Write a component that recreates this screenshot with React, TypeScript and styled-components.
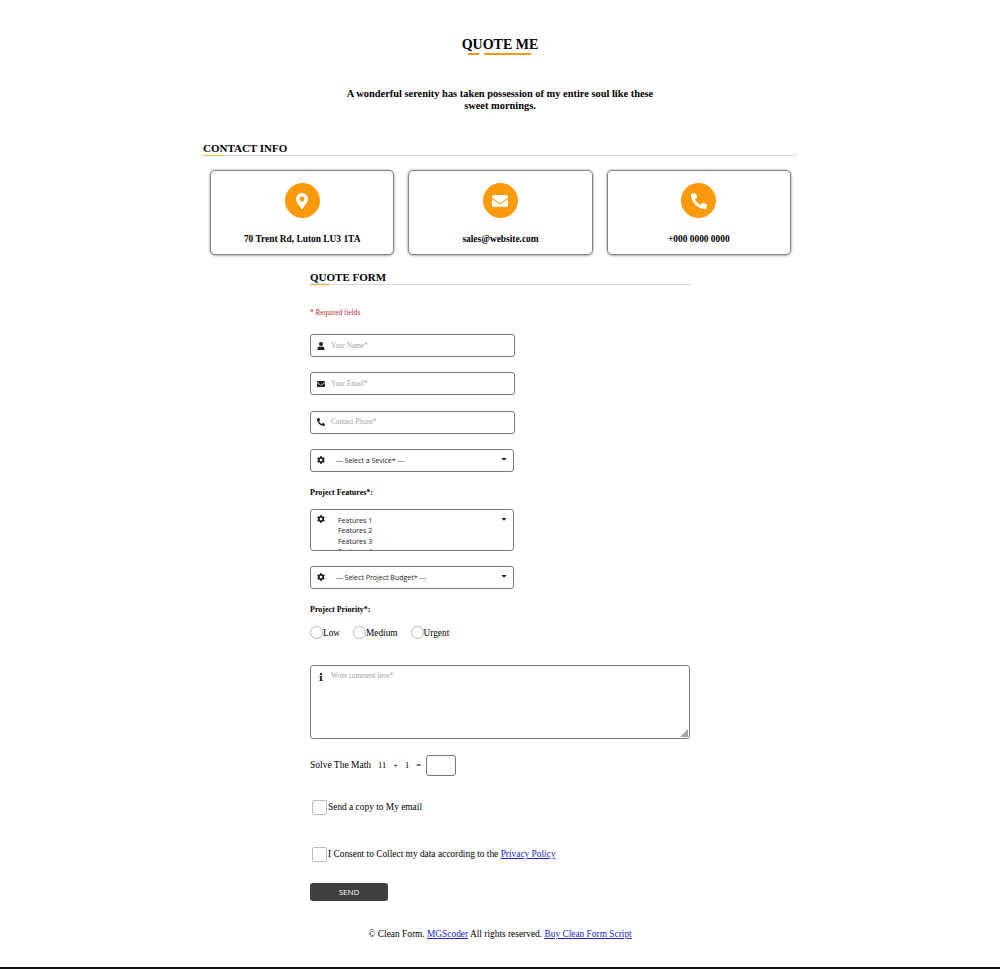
import React from 'react';
import styled, { createGlobalStyle } from 'styled-components';
import { FaMapMarkerAlt, FaEnvelope, FaPhoneAlt, FaUser, FaCog, FaInfo, FaCaretDown } from 'react-icons/fa';

const GlobalStyle = createGlobalStyle`
    html, body {
        margin: 0;
        padding: 0;
        background: #fff;
    }
    body {
        font-family: 'Liberation Serif', 'Times New Roman', serif;
        color: #000;
    }
`;

const contacts = [
    { icon: <FaMapMarkerAlt />, text: '70 Trent Rd, Luton LU3 1TA' },
    { icon: <FaEnvelope />, text: 'sales@website.com' },
    { icon: <FaPhoneAlt />, text: '+000 0000 0000' },
];

const textFields = [
    { icon: <FaUser />, placeholder: 'Your Name*' },
    { icon: <FaEnvelope />, placeholder: 'Your Email*' },
    { icon: <FaPhoneAlt />, placeholder: 'Contact Phone*' },
];

export default function App() {
    return (
        <Page>
            <GlobalStyle />
            <Title>QUOTE ME</Title>
            <TitleRule>
                <RuleDash $width={11} />
                <RuleDash $width={47} />
            </TitleRule>
            <Intro>A wonderful serenity has taken possession of my entire soul like these sweet mornings.</Intro>

            <Wrapper>
                <SectionHead>
                    <SectionTitle>CONTACT INFO</SectionTitle>
                </SectionHead>
                <Cards>
                    {contacts.map((c) => (
                        <Card key={c.text}>
                            <CardIcon>{c.icon}</CardIcon>
                            <CardText>{c.text}</CardText>
                        </Card>
                    ))}
                </Cards>
            </Wrapper>

            <Form>
                <FormHead>
                    <SectionTitle>QUOTE FORM</SectionTitle>
                </FormHead>
                <Required>* Required fields</Required>

                {textFields.map((f) => (
                    <Field key={f.placeholder}>
                        <FieldIcon>{f.icon}</FieldIcon>
                        <Placeholder>{f.placeholder}</Placeholder>
                    </Field>
                ))}

                <SelectBox>
                    <SelectIcon><FaCog /></SelectIcon>
                    <SelectText>--- Select a Sevice* ---</SelectText>
                    <Caret><FaCaretDown /></Caret>
                </SelectBox>

                <FieldLabel>Project Features*:</FieldLabel>
                <MultiBox>
                    <SelectIcon><FaCog /></SelectIcon>
                    <Options>
                        <span>Features 1</span>
                        <span>Features 2</span>
                        <span>Features 3</span>
                        <span>Features 4</span>
                    </Options>
                    <Caret><FaCaretDown /></Caret>
                </MultiBox>

                <SelectBox>
                    <SelectIcon><FaCog /></SelectIcon>
                    <SelectText>--- Select Project Budget* ---</SelectText>
                    <Caret><FaCaretDown /></Caret>
                </SelectBox>

                <FieldLabel>Project Priority*:</FieldLabel>
                <Radios>
                    {['Low', 'Medium', 'Urgent'].map((r) => (
                        <RadioItem key={r}>
                            <RadioDot />
                            {r}
                        </RadioItem>
                    ))}
                </Radios>

                <TextArea>
                    <AreaIcon><FaInfo /></AreaIcon>
                    <Placeholder>Write comment here*</Placeholder>
                    <Grip viewBox="0 0 8 8">
                        <path d="M8 0 L8 8 L0 8 Z" fill="#a8a8a8" />
                    </Grip>
                </TextArea>

                <MathRow>
                    <span>Solve The Math</span>
                    <MathSum>
                        <span>11</span>
                        <span>+</span>
                        <span>1</span>
                        <span>=</span>
                    </MathSum>
                    <MathInput />
                </MathRow>

                <CheckRow $top={24}>
                    <CheckBox />
                    Send a copy to My email
                </CheckRow>
                <CheckRow $top={32}>
                    <CheckBox />
                    I Consent to Collect my data according to the&nbsp;<a href="#privacy">Privacy Policy</a>
                </CheckRow>

                <SendButton>SEND</SendButton>
            </Form>

            <Footer>
                © Clean Form. <a href="#mgs">MGScoder</a> All rights reserved. <a href="#buy">Buy Clean Form Script</a>
            </Footer>
            <BottomLine />
        </Page>
    );
}

const Page = styled.div`
    width: 1000px;
    height: 969px;
    display: flex;
    flex-direction: column;
    align-items: center;
    overflow: hidden;
`;

const Title = styled.h1`
    margin: 36px 0 0;
    font-size: 14px;
    line-height: 17px;
    font-weight: 700;
`;

const TitleRule = styled.div`
    display: flex;
    gap: 5px;
    margin-right: 2px;
`;

const RuleDash = styled.div<{ $width: number }>`
    width: ${(p) => p.$width}px;
    height: 2px;
    background: #f59c1a;
`;

const Intro = styled.p`
    width: 320px;
    margin: 33px 0 0;
    text-align: center;
    font-size: 10.4px;
    line-height: 12px;
    font-weight: 700;
`;

const Wrapper = styled.div`
    width: 594px;
    margin-top: 30px;
`;

const SectionHead = styled.div`
    position: relative;
    border-bottom: 1px solid #d9d9d9;

    &::after {
        content: '';
        position: absolute;
        left: 0;
        bottom: -1px;
        width: 20px;
        height: 1px;
        background: #f5b041;
    }
`;

const FormHead = styled(SectionHead)`
    width: 100%;
`;

const SectionTitle = styled.h2`
    margin: 0;
    font-size: 11px;
    line-height: 13px;
    font-weight: 700;
`;

const Cards = styled.div`
    display: flex;
    gap: 14px;
    padding: 14px 6px 0 7px;
`;

const Card = styled.div`
    flex: 1;
    height: 85px;
    box-sizing: border-box;
    display: flex;
    flex-direction: column;
    align-items: center;
    padding-top: 12px;
    border: 1px solid #858585;
    border-radius: 5px;
    box-shadow: 0 0 2px rgba(0, 0, 0, 0.45), 0 1px 3px rgba(0, 0, 0, 0.2);
`;

const CardIcon = styled.div`
    width: 35px;
    height: 35px;
    border-radius: 50%;
    background: #fb9b0b;
    color: #fff;
    display: flex;
    align-items: center;
    justify-content: center;
    font-size: 16px;
`;

const CardText = styled.div`
    margin-top: 15px;
    font-size: 9.4px;
    line-height: 12px;
    font-weight: 700;
`;

const Form = styled.div`
    width: 380px;
    margin-top: 16px;
    display: flex;
    flex-direction: column;
    align-items: flex-start;
`;

const Required = styled.div`
    margin: 23px 0 16px;
    font-size: 7.3px;
    line-height: 10px;
    color: #b5272c;
`;

const Field = styled.div`
    width: 205px;
    height: 23px;
    box-sizing: border-box;
    margin-bottom: 15.33px;
    display: flex;
    align-items: center;
    padding-left: 6px;
    border: 1px solid #777;
    border-radius: 3px;
`;

const FieldIcon = styled.span`
    width: 14px;
    display: flex;
    font-size: 8px;
    color: #222;
`;

const Placeholder = styled.span`
    font-size: 7.2px;
    color: #a5a5a5;
`;

const SelectBox = styled.div`
    width: 204px;
    height: 23px;
    box-sizing: border-box;
    display: flex;
    align-items: center;
    padding: 0 5px 0 6px;
    border: 1px solid #777;
    border-radius: 3px;
`;

const SelectIcon = styled.span`
    width: 19px;
    display: flex;
    font-size: 8px;
    color: #222;
`;

const SelectText = styled.span`
    flex: 1;
    font-family: 'Open Sans', 'Liberation Sans', sans-serif;
    font-size: 7px;
    color: #222;
`;

const Caret = styled.span`
    display: flex;
    margin-bottom: 3px;
    font-size: 8px;
    color: #222;
`;

const FieldLabel = styled.div`
    margin: 16px 0 11px;
    font-size: 8px;
    line-height: 10px;
    font-weight: 700;
`;

const MultiBox = styled.div`
    width: 204px;
    height: 42px;
    box-sizing: border-box;
    margin-bottom: 15px;
    display: flex;
    align-items: flex-start;
    padding: 5px 5px 0 6px;
    border: 1px solid #777;
    border-radius: 3px;
    overflow: hidden;
`;

const Options = styled.div`
    flex: 1;
    display: flex;
    flex-direction: column;
    padding: 1px 0 0 2px;
    font-family: 'Open Sans', 'Liberation Sans', sans-serif;
    font-size: 7px;
    line-height: 10.5px;
    color: #222;
`;

const Radios = styled.div`
    display: flex;
    gap: 13px;
`;

const RadioItem = styled.label`
    display: flex;
    align-items: center;
    font-size: 9.3px;
    line-height: 14px;
`;

const RadioDot = styled.span`
    width: 13px;
    height: 13px;
    box-sizing: border-box;
    border: 1px solid #b5b5b5;
    border-radius: 50%;
`;

const TextArea = styled.div`
    position: relative;
    width: 380px;
    height: 74px;
    box-sizing: border-box;
    margin-top: 25px;
    display: flex;
    align-items: flex-start;
    padding: 6px 6px 5px;
    border: 1px solid #777;
    border-radius: 3px;
`;

const AreaIcon = styled.span`
    width: 14px;
    display: flex;
    padding-top: 1px;
    font-size: 8px;
    color: #222;
`;

const Grip = styled.svg`
    position: absolute;
    right: 1px;
    bottom: 1px;
    width: 8px;
    height: 8px;
`;

const MathRow = styled.div`
    display: flex;
    align-items: center;
    margin-top: 16px;
    font-size: 9.5px;
`;

const MathSum = styled.span`
    display: flex;
    gap: 7px;
    margin: 0 5px 0 7px;
    font-size: 8.5px;
`;

const MathInput = styled.div`
    width: 30px;
    height: 21px;
    box-sizing: border-box;
    border: 1px solid #777;
    border-radius: 3px;
`;

const CheckRow = styled.div<{ $top: number }>`
    display: flex;
    align-items: center;
    margin: ${(p) => p.$top}px 0 0 2px;
    font-size: 9.4px;
    line-height: 15px;

    a {
        color: #2222cc;
    }
`;

const CheckBox = styled.span`
    width: 15px;
    height: 15px;
    box-sizing: border-box;
    margin-right: 1px;
    border: 1px solid #bbb;
    border-radius: 2px;
`;

const SendButton = styled.button`
    width: 78px;
    height: 18px;
    margin-top: 21px;
    padding: 0;
    border: none;
    border-radius: 3px;
    background: #3f3f3f;
    color: #fff;
    font-family: 'Open Sans', 'Liberation Sans', sans-serif;
    font-size: 8px;
`;

const Footer = styled.div`
    margin-top: 27px;
    font-size: 9.4px;
    line-height: 12px;

    a {
        color: #2222cc;
    }
`;

const BottomLine = styled.div`
    width: 1000px;
    height: 2px;
    margin-top: auto;
    background: #111;
`;
